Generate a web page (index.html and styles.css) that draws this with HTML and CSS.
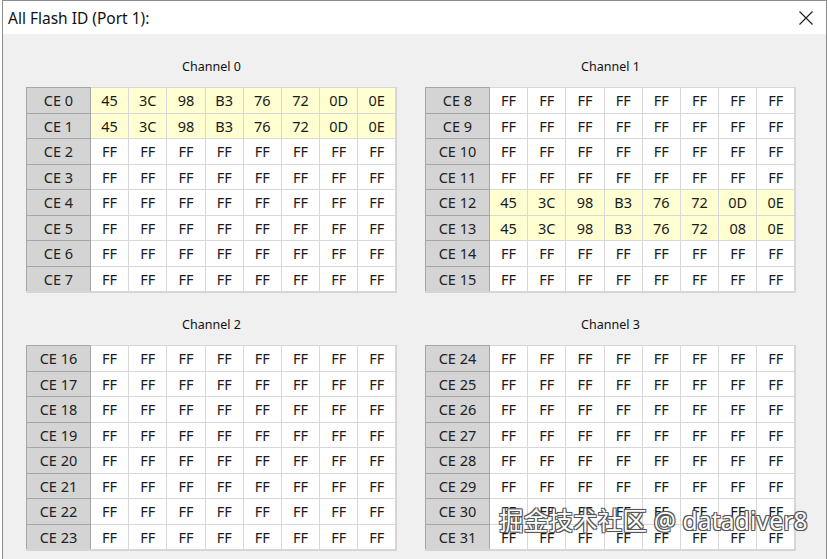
FILE: index.html
```html
<!DOCTYPE html>
<html lang="en">

<head>
    <meta charset="UTF-8">
    <meta name="viewport" content="width=device-width, initial-scale=1.0">
    <title>All Flash ID</title>
    <link rel="stylesheet" href="styles.css">
</head>

<body>
    <div class="window">
        <div class="title-bar">
            <span class="title">All Flash ID (Port 1):</span>
            <span class="close">
                <svg width="16" height="16" viewBox="0 0 16 16">
                    <path d="M1.5 1.5 L14.5 14.5 M14.5 1.5 L1.5 14.5" stroke="#222" stroke-width="1.2" fill="none"/>
                </svg>
            </span>
        </div>
        <div class="content" id="content"></div>
        <div class="watermark">掘金技术社区 @ datadiver8</div>
    </div>
    <script>
        const idRows = {
            0: ["45", "3C", "98", "B3", "76", "72", "0D", "0E"],
            1: ["45", "3C", "98", "B3", "76", "72", "0D", "0E"],
            12: ["45", "3C", "98", "B3", "76", "72", "0D", "0E"],
            13: ["45", "3C", "98", "B3", "76", "72", "08", "0E"]
        };

        function buildChannel(ch) {
            let html = `<div class="channel"><div class="channel-label">Channel ${ch}</div>
                <table class="grid"><colgroup><col class="ce-col">`;
            for (let c = 0; c < 8; c++) html += `<col>`;
            html += `</colgroup>`;
            for (let r = 0; r < 8; r++) {
                const ce = ch * 8 + r;
                const vals = idRows[ce];
                html += `<tr${vals ? ' class="hit"' : ''}><td class="ce">CE ${ce}</td>`;
                for (let c = 0; c < 8; c++) {
                    html += `<td>${vals ? vals[c] : "FF"}</td>`;
                }
                html += `</tr>`;
            }
            html += `</table></div>`;
            return html;
        }

        let out = "";
        for (let ch = 0; ch < 4; ch++) out += buildChannel(ch);
        document.getElementById("content").innerHTML = out;
    </script>
</body>

</html>
```

FILE: styles.css
```css
body {
    margin: 0;
    background-color: #ffffff;
    font-family: 'Noto Sans', 'Liberation Sans', sans-serif;
    overflow: hidden;
}

.window {
    position: relative;
    margin-left: 2px;
    width: 825px;
    height: 559px;
    border: 1px solid #8c8c8c;
    border-bottom: none;
    background-color: #f0f0f0;
    box-sizing: border-box;
}

.title-bar {
    height: 33px;
    background-color: #ffffff;
    display: flex;
    align-items: center;
    justify-content: space-between;
    padding: 0 12px 0 5px;
}

.title {
    font-size: 15.5px;
    color: #111;
}

.close {
    display: flex;
    align-items: center;
}

.content {
    display: grid;
    grid-template-columns: 371px 371px;
    column-gap: 28px;
    row-gap: 24px;
    padding: 25px 0 0 23px;
}

.channel-label {
    text-align: center;
    font-size: 12.5px;
    color: #111;
    height: 16px;
    line-height: 16px;
    margin-bottom: 12px;
}

.grid {
    width: 371px;
    table-layout: fixed;
    border-collapse: collapse;
    border-top: 1px solid #a0a0a0;
    border-left: 1px solid #a0a0a0;
    border-right: 2px solid #d6d6d6;
    border-bottom: 2px solid #d6d6d6;
    background-color: #ffffff;
    font-size: 14.5px;
}

.ce-col {
    width: 64px;
}

.grid td {
    height: 24.5px;
    padding: 0;
    text-align: center;
    border: 1px solid #d8d8d8;
    color: #1a1a1a;
    line-height: 18px;
}

.grid td.ce {
    background-color: #d4d4d4;
    border-color: #a6a6a6;
    color: #222;
}

.grid tr.hit td {
    background-color: #ffffd2;
}

.grid tr.hit td.ce {
    background-color: #d4d4d4;
}

.watermark {
    position: absolute;
    left: 496px;
    top: 501px;
    font-family: 'Noto Sans', 'Noto Sans CJK SC', sans-serif;
    font-size: 24.5px;
    color: #ffffff;
    letter-spacing: 0.2px;
    text-shadow: -1px -1px 0 #555, 1px -1px 0 #555, -1px 1px 0 #555, 1px 1px 0 #555, 0 0 2px #333;
    white-space: nowrap;
}
```
